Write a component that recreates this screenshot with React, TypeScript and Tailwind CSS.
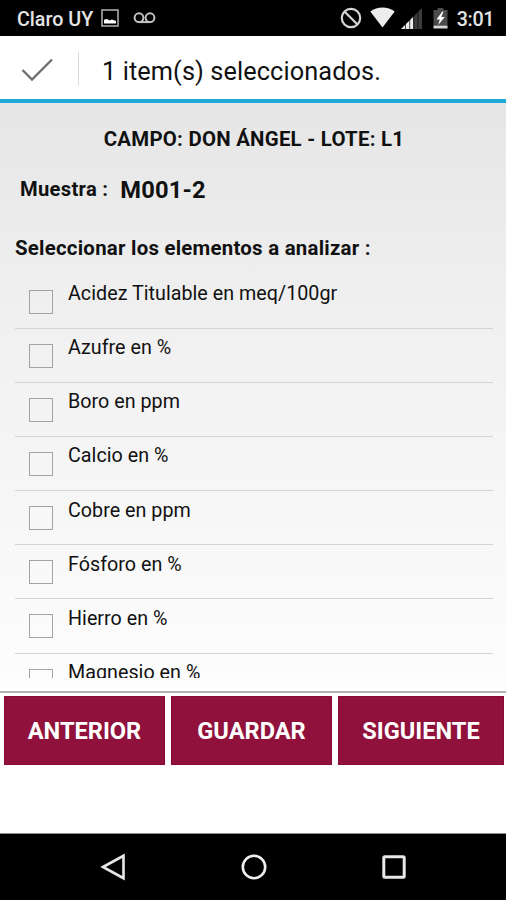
import React, { useState } from 'react';

const ELEMENTS = [
    'Acidez Titulable en meq/100gr',
    'Azufre en %',
    'Boro en ppm',
    'Calcio en %',
    'Cobre en ppm',
    'Fósforo en %',
    'Hierro en %',
    'Magnesio en %',
];

const StatusBar = () => (
    <header className="flex h-[35.5px] shrink-0 items-center bg-black pl-[17px] pr-[12px] text-[#e4e4e4]">
        <span className="pt-[4px] text-[19.7px] font-medium leading-none">Claro UY</span>
        <svg className="ml-[8px]" width="18" height="18" viewBox="0 0 18 18">
            <rect x="1" y="1" width="16" height="16" fill="none" stroke="#a8a8a8" strokeWidth="1.6" />
            <path d="M3 14.5V10.8L6 10L8.5 11.5L11 10.6L15 12V14.5Z" fill="#fff" />
        </svg>
        <svg className="ml-[13.5px]" width="23" height="12" viewBox="0 0 23 12" fill="none" stroke="#c4c4c4" strokeWidth="2">
            <circle cx="6" cy="5.7" r="4.4" />
            <circle cx="17" cy="5.7" r="4.4" />
            <path d="M6 10.1H17" />
        </svg>
        <div className="ml-auto flex items-center">
            <svg width="22" height="22" viewBox="0 0 22 22" fill="none" stroke="#d6d6d6" strokeWidth="2.2">
                <circle cx="11" cy="11" r="9.2" />
                <path d="M4.5 4.5L17.5 17.5" />
            </svg>
            <svg className="ml-[8px]" width="25" height="21" viewBox="0 0 25 21">
                <path d="M0.3 4.6C7-1 18-1 24.7 4.6L12.5 20.5Z" fill="#ededed" />
            </svg>
            <svg className="ml-[6px] mt-[2px]" width="22" height="21" viewBox="0 0 22 21">
                <path d="M0 21L12.5 8.5V21Z" fill="#ededed" />
                <path d="M12.5 8.5L21 0V21H12.5Z" fill="#3c3c3c" />
                <path d="M4.5 14V21M8.7 10V21M12.8 7V21M17 3V21" stroke="#000" strokeWidth="0.7" />
            </svg>
            <svg className="ml-[10px] mt-[1px]" width="15" height="21" viewBox="0 0 15 21">
                <path d="M4.5 0H10.5V2H14.5V18H0.5V2H4.5Z" fill="#4b4b4b" />
                <path d="M0.5 17.7H14.5V20.5H0.5Z" fill="#d8d8d8" />
                <path d="M9.3 3.5L3.5 11.5H6.8L5.2 17L11.8 9H8.3L10.5 3.5Z" fill="#fff" />
            </svg>
            <span className="ml-[9px] pt-[4px] text-[19.7px] font-medium leading-none tracking-[-0.4px]">3:01</span>
        </div>
    </header>
);

const ActionBar = () => (
    <div className="flex h-[67px] shrink-0 items-center border-b-[4.5px] border-[#1fa9d8] bg-white pl-[21px]">
        <svg className="mt-[6px]" width="33" height="24" viewBox="0 0 33 24" fill="none" stroke="#707070" strokeWidth="2.4">
            <path d="M1.5 12L11 21.5L31 1.5" />
        </svg>
        <div className="ml-[24px] mt-[4px] h-[34px] w-px bg-[#dcdcdc]" />
        <h1 className="ml-[23px] pt-[9px] text-[25.3px] leading-none tracking-[0.1px] text-[#111]">1 item(s) seleccionados.</h1>
    </div>
);

const NavBar = () => (
    <nav className="flex h-[67px] shrink-0 items-center border-t border-[#8a8a8a] bg-black pl-[100px]">
        <svg width="26" height="28" viewBox="0 0 26 28" fill="none" stroke="#e8e8e8" strokeWidth="2.6">
            <path d="M3 14L23.5 2.8V25.2Z" />
        </svg>
        <svg className="ml-[114px]" width="28" height="28" viewBox="0 0 28 28" fill="none" stroke="#f0f0f0" strokeWidth="2.6">
            <circle cx="14" cy="14" r="11.2" />
        </svg>
        <svg className="ml-[113px]" width="26" height="26" viewBox="0 0 26 26" fill="none" stroke="#e8e8e8" strokeWidth="3">
            <rect x="2.8" y="2.8" width="20.4" height="20.4" rx="1" />
        </svg>
    </nav>
);

const App = () => {
    const [checked, setChecked] = useState<string[]>([]);

    const toggle = (name: string) => {
        setChecked(checked.includes(name) ? checked.filter((c) => c !== name) : [...checked, name]);
    };

    return (
        <div className="flex h-[900px] w-[506px] flex-col overflow-hidden bg-[#fefefe] font-['Roboto',sans-serif]">
            <StatusBar />
            <ActionBar />
            <main className="flex h-[588px] shrink-0 flex-col bg-linear-to-b from-[#e6e6e6] via-[#f1f1f1] via-40% to-[#fdfdfd] text-[#111]">
                <h2 className="mt-[24px] pl-[2px] text-center text-[20.4px] font-bold leading-[24px] tracking-[0.25px]">CAMPO: DON ÁNGEL - LOTE: L1</h2>
                <div className="mt-[23px] flex items-center pl-[20px] leading-[30px]">
                    <span className="pb-[3px] text-[20.2px] font-bold tracking-[0.3px]">Muestra :</span>
                    <span className="ml-[12px] text-[23.7px] font-bold tracking-[0.15px]">M001-2</span>
                </div>
                <p className="mt-[29px] pl-[15px] text-[20.4px] font-bold leading-[24px] tracking-[0.25px]">Seleccionar los elementos a analizar :</p>
                <ul className="ml-[15px] mr-[13px] mt-[15px] h-[403.5px] overflow-hidden">
                    {ELEMENTS.map((name) => (
                        <li key={name} className="flex h-[54.17px] items-start border-b border-[#d4d4d4] pl-[14px]" onClick={() => toggle(name)}>
                            <span className={`mt-[15px] size-[24px] border-[1.5px] border-[#a3a3a3] ${checked.includes(name) ? 'bg-[#1fa9d8]' : ''}`} />
                            <span className="ml-[15px] mt-[7.5px] text-[19.7px] leading-[24px] tracking-[0.03px]">{name}</span>
                        </li>
                    ))}
                </ul>
            </main>
            <footer className="flex shrink-0 gap-[6px] border-t-2 border-[#b3b3b3] px-[4px] pt-[3px] text-[23.6px] font-bold text-white">
                <button className="h-[69px] w-[161px] shrink-0 border border-[#8c0a30] bg-[#90123c] pt-[3px]">ANTERIOR</button>
                <button className="h-[69px] w-[161px] shrink-0 border border-[#8c0a30] bg-[#90123c] pt-[3px]">GUARDAR</button>
                <button className="h-[69px] w-[166px] shrink-0 border border-[#8c0a30] bg-[#90123c] pt-[3px]">SIGUIENTE</button>
            </footer>
            <div className="flex-1" />
            <NavBar />
        </div>
    );
};

export default App;
